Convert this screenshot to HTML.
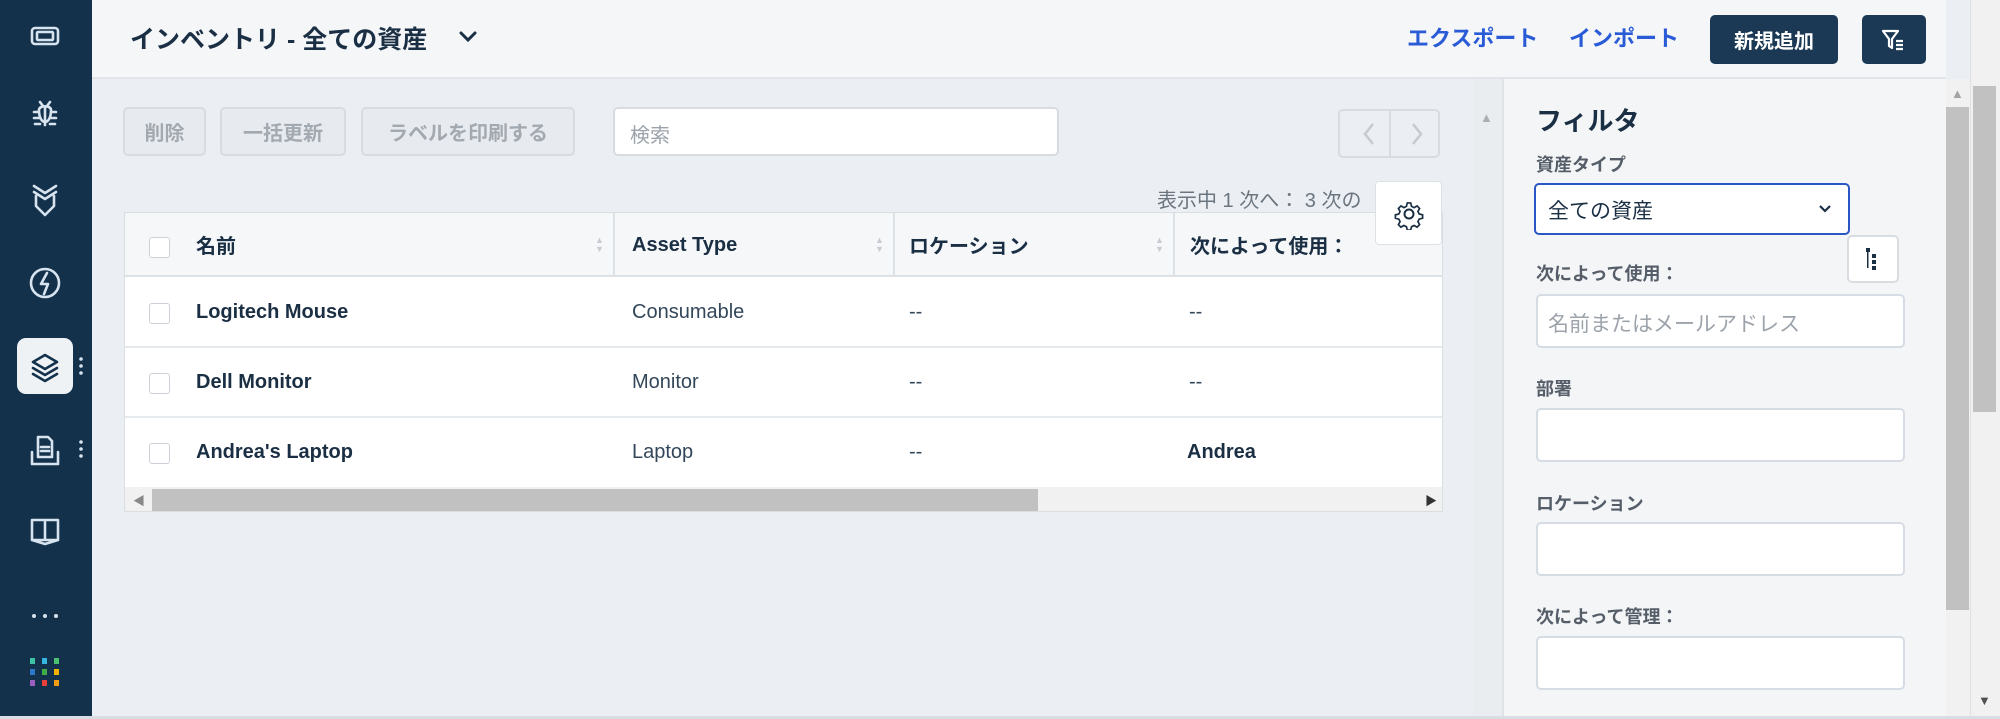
<!DOCTYPE html>
<html><head><meta charset="utf-8"><style>
*{box-sizing:border-box;margin:0;padding:0}
body{width:2000px;height:719px;overflow:hidden;background:#ebeef2;font-family:"Liberation Sans","Noto Sans CJK JP",sans-serif;color:#1b2f44;position:relative}
.abs{position:absolute}
#side{left:0;top:0;width:92px;height:719px;background:#13314b}
#head{left:92px;top:0;width:1854px;height:79px;background:#f5f6f8;border-bottom:2px solid #e1e4e8}
.btnl{background:#e7eaee;border:2px solid #d8dce1;border-radius:5px;color:#a3a9b1;font-size:20px;font-weight:bold;display:flex;align-items:center;justify-content:center}
.cb{width:21px;height:21px;border:1.5px solid #cdd2d8;border-radius:3px;background:#fff}
.th{font-size:20px;font-weight:bold;color:#1b2f44}
.td{font-size:20px;color:#33475b}
.lbl{font-size:18px;font-weight:bold;color:#555e68;left:1536px}
.inp{left:1536px;width:369px;height:54px;background:#fff;border:2px solid #d6dce3;border-radius:5px}
.sort{width:8px;color:#c8cdd3;font-size:9px;line-height:9px}
</style></head><body>
<div id="side" class="abs">
<svg class="abs" style="left:0;top:0" width="92" height="719" fill="none" stroke="#d7e3ee" stroke-width="2.6" stroke-linecap="round" stroke-linejoin="round">
<rect x="32" y="28" width="26" height="16" rx="3"/><rect x="37" y="32" width="16" height="8" rx="1"/>
<path d="M40 102l3 4M50 102l-3 4M39 110c0 16 12 16 12 0c0-5-12-5-12 0zM45 108v17M34 112h5M51 112h5M34 118h5M51 118h5M35 124h5M50 124h5"/>
<path d="M34 186l11 7l11-7M34 192l11 7l11-7M36 196v10l9 9l9-9v-10"/>
<circle cx="45" cy="283" r="14"/><path d="M47 273l-6 11h7l-4 10"/>
<rect x="17" y="338" width="56" height="56" rx="9" fill="#eef2f5" stroke="none"/>
<path d="M45 355l-12 7l12 7l12-7zM33 368l12 7l12-7M33 374l12 7l12-7" stroke="#13314b"/>
<circle cx="81" cy="359" r="1.8" fill="#d7e3ee" stroke="none"/><circle cx="81" cy="366" r="1.8" fill="#d7e3ee" stroke="none"/><circle cx="81" cy="373" r="1.8" fill="#d7e3ee" stroke="none"/>
<path d="M38 437h10l4 4v16h-14zM41 447h8M41 451h8M32 452v12h26v-12"/>
<circle cx="81" cy="442" r="1.8" fill="#d7e3ee" stroke="none"/><circle cx="81" cy="449" r="1.8" fill="#d7e3ee" stroke="none"/><circle cx="81" cy="456" r="1.8" fill="#d7e3ee" stroke="none"/>
<path d="M32 520v20h26v-20zM45 522v18M32 540l13 4l13-4"/>
<circle cx="34" cy="616" r="2" fill="#d7e3ee" stroke="none"/><circle cx="45" cy="616" r="2" fill="#d7e3ee" stroke="none"/><circle cx="56" cy="616" r="2" fill="#d7e3ee" stroke="none"/>
<g stroke="none"><rect x="30" y="658" width="5" height="6" fill="#3fc1a5"/><rect x="42" y="658" width="5" height="6" fill="#35b6e0"/><rect x="54" y="658" width="5" height="6" fill="#4cc071"/>
<rect x="30" y="669" width="5" height="6" fill="#2e76c7"/><rect x="42" y="669" width="5" height="6" fill="#3fae49"/><rect x="54" y="669" width="5" height="6" fill="#f0b400"/>
<rect x="30" y="680" width="5" height="6" fill="#9b5fc0"/><rect x="42" y="680" width="5" height="6" fill="#e8413c"/><rect x="54" y="680" width="5" height="6" fill="#f39c12"/></g>
</svg></div>
<div id="head" class="abs"></div>
<div class="abs" style="left:130px;top:20px;font-size:25px;font-weight:bold;color:#1b2f44">インベントリ - 全ての資産</div>
<svg class="abs" style="left:458px;top:30px" width="20" height="14" fill="none" stroke="#1b2f44" stroke-width="3" stroke-linecap="round"><path d="M3 3l7 7l7-7"/></svg>
<div class="abs" style="left:1407px;top:21px;font-size:22px;font-weight:bold;color:#2a5bd7">エクスポート</div>
<div class="abs" style="left:1569px;top:21px;font-size:22px;font-weight:bold;color:#2a5bd7">インポート</div>
<div class="abs" style="left:1710px;top:15px;width:128px;height:49px;background:#1b3954;border-radius:5px;color:#fff;font-size:20px;font-weight:bold;display:flex;align-items:center;justify-content:center">新規追加</div>
<div class="abs" style="left:1862px;top:15px;width:64px;height:49px;background:#1b3954;border-radius:5px"></div>
<svg class="abs" style="left:1880px;top:27px" width="28" height="26" fill="none" stroke="#fff" stroke-width="2.2" stroke-linejoin="round"><path d="M3 4h15l-6 8v9l-3-2v-7z"/><path d="M16 14h7M16 18h7M16 22h7"/></svg>

<div class="abs btnl" style="left:123px;top:107px;width:83px;height:49px">削除</div>
<div class="abs btnl" style="left:220px;top:107px;width:126px;height:49px">一括更新</div>
<div class="abs btnl" style="left:361px;top:107px;width:214px;height:49px">ラベルを印刷する</div>
<div class="abs" style="left:613px;top:107px;width:446px;height:49px;background:#fff;border:2px solid #d8dce1;border-radius:5px;padding:10px 15px;font-size:20px;color:#9ca3ab">検索</div>
<div class="abs" style="left:1338px;top:109px;width:102px;height:49px;border:2px solid #d8dce1;border-radius:5px;background:#ebeef2"></div>
<div class="abs" style="left:1389px;top:109px;width:2px;height:49px;background:#d8dce1"></div>
<svg class="abs" style="left:1355px;top:120px" width="80" height="28" fill="none" stroke="#c5cad0" stroke-width="2.5"><path d="M18 4l-8 10l8 10M58 4l8 10l-8 10"/></svg>
<div class="abs" style="left:1157px;top:184px;font-size:20px;color:#6b7580;width:230px;overflow:hidden;white-space:nowrap">表示中 1 次へ： 3 次の</div>
<div class="abs" style="left:1473px;top:79px;width:29px;height:640px;background:#eaedf0"></div>
<div class="abs" style="left:1480px;top:110px;color:#a9aeb4;font-size:13px">▲</div>

<div class="abs" style="left:124px;top:212px;width:1319px;height:300px;background:#fff;border:1px solid #d9dee3;overflow:hidden">
 <div class="abs" style="left:0;top:0;width:1319px;height:64px;background:#f5f7f9;border-bottom:2px solid #dde2e7"></div>
 <div class="abs" style="left:488px;top:0;width:2px;height:64px;background:#dde2e7"></div>
 <div class="abs" style="left:768px;top:0;width:2px;height:64px;background:#dde2e7"></div>
 <div class="abs" style="left:1048px;top:0;width:2px;height:64px;background:#dde2e7"></div>
 <div class="abs" style="left:0;top:133px;width:1319px;height:2px;background:#e6eaee"></div>
 <div class="abs" style="left:0;top:203px;width:1319px;height:2px;background:#e6eaee"></div>
 <div class="abs cb" style="left:24px;top:24px"></div>
 <div class="abs cb" style="left:24px;top:90px"></div>
 <div class="abs cb" style="left:24px;top:160px"></div>
 <div class="abs cb" style="left:24px;top:230px"></div>
 <div class="abs th" style="left:71px;top:17px">名前</div>
 <div class="abs th" style="left:507px;top:21px">Asset Type</div>
 <div class="abs th" style="left:784px;top:17px">ロケーション</div>
 <div class="abs th" style="left:1065px;top:17px">次によって使用：</div>
 <div class="abs sort" style="left:470px;top:23px">▲<br>▼</div>
 <div class="abs sort" style="left:750px;top:23px">▲<br>▼</div>
 <div class="abs sort" style="left:1030px;top:23px">▲<br>▼</div>
 <div class="abs th" style="left:71px;top:88px">Logitech Mouse</div>
 <div class="abs td" style="left:507px;top:88px">Consumable</div>
 <div class="abs td" style="left:784px;top:88px">--</div>
 <div class="abs td" style="left:1064px;top:88px">--</div>
 <div class="abs th" style="left:71px;top:158px">Dell Monitor</div>
 <div class="abs td" style="left:507px;top:158px">Monitor</div>
 <div class="abs td" style="left:784px;top:158px">--</div>
 <div class="abs td" style="left:1064px;top:158px">--</div>
 <div class="abs th" style="left:71px;top:228px">Andrea's Laptop</div>
 <div class="abs td" style="left:507px;top:228px">Laptop</div>
 <div class="abs td" style="left:784px;top:228px">--</div>
 <div class="abs th" style="left:1062px;top:228px">Andrea</div>
 <div class="abs" style="left:0;top:274px;width:1319px;height:26px;background:#f1f1f1"></div>
 <div class="abs" style="left:27px;top:276px;width:886px;height:22px;background:#c1c1c1"></div>
 <div class="abs" style="left:8px;top:279px;font-size:12px;color:#888">◀</div>
 <div class="abs" style="left:1300px;top:279px;font-size:12px;color:#333">▶</div>
</div>
<div class="abs" style="left:1375px;top:181px;width:67px;height:64px;background:#fff;border:1px solid #dde2e7;border-radius:4px"></div>
<svg class="abs" style="left:1393px;top:198px" width="32" height="32" fill="none" stroke="#1b2f44" stroke-width="2"><circle cx="16" cy="16" r="4.5"/><path d="M14 3h4l1 4l3 1.5l3.5-2l3 3l-2 3.5l1.5 3l4 1v4l-4 1l-1.5 3l2 3.5l-3 3l-3.5-2l-3 1.5l-1 4h-4l-1-4l-3-1.5l-3.5 2l-3-3l2-3.5l-1.5-3l-4-1v-4l4-1l1.5-3l-2-3.5l3-3l3.5 2l3-1.5z" transform="translate(16 16) scale(.85) translate(-16 -16)"/></svg>

<div class="abs" style="left:1502px;top:79px;width:444px;height:640px;background:#f4f5f7;border-left:2px solid #dfe3e7"></div>
<div class="abs" style="left:1536px;top:101px;font-size:26px;font-weight:bold;color:#1b2f44">フィルタ</div>
<div class="abs lbl" style="top:151px">資産タイプ</div>
<div class="abs" style="left:1534px;top:183px;width:316px;height:52px;background:#fff;border:2.5px solid #2a56c6;border-radius:5px;padding:10px 12px;font-size:21px;color:#1b2f44">全ての資産</div>
<svg class="abs" style="left:1817px;top:203px" width="16" height="12" fill="none" stroke="#1b2f44" stroke-width="2.2"><path d="M3 3l5 5l5-5"/></svg>
<div class="abs" style="left:1847px;top:235px;width:52px;height:48px;background:#fff;border:2px solid #d8dde2;border-radius:5px"></div>
<svg class="abs" style="left:1863px;top:246px" width="20" height="26" fill="#1b2f44"><rect x="3" y="2" width="4" height="4"/><rect x="9" y="8" width="4" height="4"/><rect x="9" y="14" width="4" height="4"/><rect x="9" y="20" width="4" height="4"/><rect x="4" y="6" width="1.5" height="16"/></svg>
<div class="abs lbl" style="top:260px">次によって使用：</div>
<div class="abs inp" style="top:294px;padding:12px 10px;font-size:21px;color:#9ca3ab">名前またはメールアドレス</div>
<div class="abs lbl" style="top:375px">部署</div>
<div class="abs inp" style="top:408px"></div>
<div class="abs lbl" style="top:490px">ロケーション</div>
<div class="abs inp" style="top:522px"></div>
<div class="abs lbl" style="top:603px">次によって管理：</div>
<div class="abs inp" style="top:636px"></div>

<div class="abs" style="left:1946px;top:79px;width:24px;height:640px;background:#f1f1f1"></div>
<div class="abs" style="left:1946px;top:107px;width:23px;height:503px;background:#c1c1c1"></div>
<div class="abs" style="left:1951px;top:86px;font-size:13px;color:#a3a3a3">▲</div>
<div class="abs" style="left:1970px;top:0;width:30px;height:719px;background:#f1f1f1;border-left:1px solid #e0e0e0"></div>
<div class="abs" style="left:1973px;top:86px;width:23px;height:326px;background:#c1c1c1"></div>
<div class="abs" style="left:1978px;top:693px;font-size:13px;color:#505050">▼</div>
<div class="abs" style="left:0;top:716px;width:2000px;height:3px;background:#d9dde1"></div>
</body></html>
